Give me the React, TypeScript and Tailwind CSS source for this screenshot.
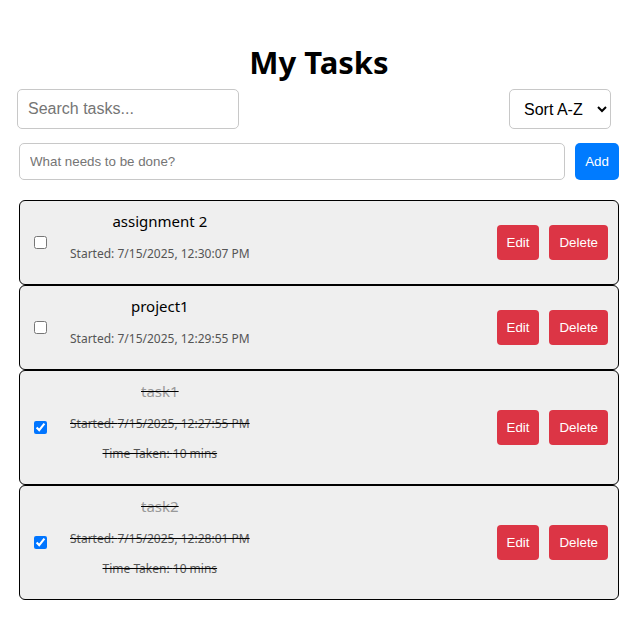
import { useState } from "react";

type Task = {
  id: number;
  text: string;
  started: string;
  done: boolean;
  taken?: string;
};

const initialTasks: Task[] = [
  { id: 1, text: "assignment 2", started: "7/15/2025, 12:30:07 PM", done: false },
  { id: 2, text: "project1", started: "7/15/2025, 12:29:55 PM", done: false },
  { id: 3, text: "task1", started: "7/15/2025, 12:27:55 PM", done: true, taken: "10 mins" },
  { id: 4, text: "task2", started: "7/15/2025, 12:28:01 PM", done: true, taken: "10 mins" },
];

const uiFont = { fontFamily: '"Noto Sans", "Open Sans", sans-serif' };
const arial = { fontFamily: '"Liberation Sans", Arial, sans-serif' };

export default function App() {
  const [tasks, setTasks] = useState<Task[]>(initialTasks);
  const [search, setSearch] = useState("");
  const [newTask, setNewTask] = useState("");

  const toggle = (id: number) =>
    setTasks(tasks.map((t) => (t.id === id ? { ...t, done: !t.done } : t)));

  const remove = (id: number) => setTasks(tasks.filter((t) => t.id !== id));

  const visible = tasks.filter((t) => t.text.toLowerCase().includes(search.toLowerCase()));

  return (
    <div className="bg-white pl-[19px] pr-[9px] pb-5 text-black" style={uiFont}>
      <h1 className="pt-[42px] text-center text-[31px] font-bold leading-[40px]">My Tasks</h1>

      <div className="-ml-[2px] mr-[8px] mt-[7px] flex items-center justify-between" style={arial}>
        <input
          value={search}
          onChange={(e) => setSearch(e.target.value)}
          placeholder="Search tasks..."
          className="h-[40px] w-[222px] rounded-[5px] border border-[#c8c8c8] px-[10px] text-[16px] outline-none placeholder:text-[#757575]"
        />
        <select className="h-[40px] w-[102px] rounded-[5px] border border-[#c8c8c8] bg-white pl-[10px] text-[16px] text-black">
          <option>Sort A-Z</option>
          <option>Sort Z-A</option>
        </select>
      </div>

      <div className="mt-[14px] flex gap-[10px]" style={arial}>
        <input
          value={newTask}
          onChange={(e) => setNewTask(e.target.value)}
          placeholder="What needs to be done?"
          className="h-[37px] flex-1 rounded-[5px] border border-[#c8c8c8] px-[10px] text-[13.333px] outline-none placeholder:text-[#757575]"
        />
        <button className="h-[37px] w-[44px] rounded-[5px] bg-[#007bff] text-[13.333px] text-white">Add</button>
      </div>

      <ul className="mt-[20px]">
        {visible.map((t) => (
          <li
            key={t.id}
            className="flex items-center justify-between rounded-[6px] border border-black bg-[#efefef] p-[10px]"
          >
            <div className="flex items-center">
              <input
                type="checkbox"
                checked={t.done}
                onChange={() => toggle(t.id)}
                className="my-[3px] ml-[4px] mr-[3px] h-[13px] w-[13px]"
              />
              <div className={`ml-[20px] text-center ${t.done ? "line-through" : ""}`}>
                <div className={`text-[15px] leading-[21px] ${t.done ? "text-[#999]" : "text-black"}`}>
                  {t.text}
                </div>
                <p className="mt-[13px] mb-[12px] text-[12px] leading-[17px] text-[#555]">Started: {t.started}</p>
                {t.taken && (
                  <p className="mt-[13px] mb-[12px] text-[12px] leading-[17px] text-[#555]">Time Taken: {t.taken}</p>
                )}
              </div>
            </div>
            <div className="flex gap-[10px]" style={arial}>
              <button className="h-[35px] rounded-[4px] bg-[#dc3545] px-[10px] text-[13.333px] text-white">Edit</button>
              <button
                onClick={() => remove(t.id)}
                className="h-[35px] rounded-[4px] bg-[#dc3545] px-[10px] text-[13.333px] text-white"
              >
                Delete
              </button>
            </div>
          </li>
        ))}
      </ul>
    </div>
  );
}
